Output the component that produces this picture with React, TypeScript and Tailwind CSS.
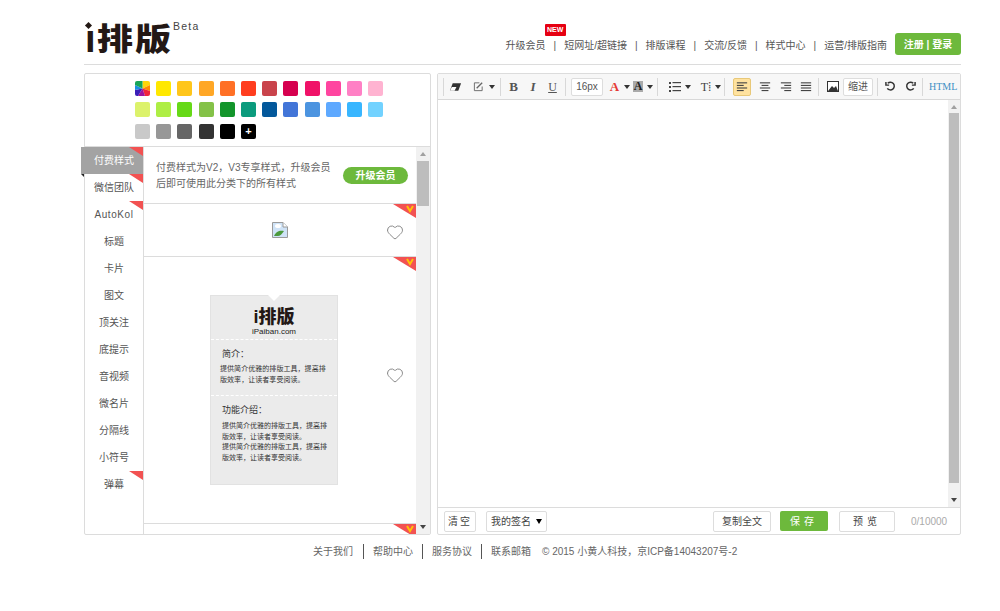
import { Heart } from "lucide-react";

const swatchRows = [
  ["rainbow", "#FFE800", "#FFC61B", "#FFA726", "#FF7026", "#FF3D1F", "#C9434B", "#D6004F", "#F01268", "#FF45A0", "#FF80C5", "#FFB3D1"],
  ["#DCF26B", "#AEEE45", "#66D917", "#84C248", "#13952B", "#0B9B7D", "#03589B", "#4275D8", "#4C94E0", "#5EA9FF", "#38B6FF", "#72D2FF"],
  ["#C9C9C9", "#979797", "#666666", "#333333", "#000000", "plus"],
];

const tabs = ["付费样式", "微信团队", "AutoKol", "标题", "卡片", "图文", "顶关注", "底提示", "音视频", "微名片", "分隔线", "小符号", "弹幕"];
const flagged = ["付费样式", "微信团队", "AutoKol", "弹幕"];
const navItems = ["升级会员", "短网址/超链接", "排版课程", "交流/反馈", "样式中心", "运营/排版指南"];

function Rainbow() {
  return (
    <svg viewBox="0 0 15 15" className="w-[15px] h-[15px] rounded-[2px]">
      <path d="M7.5 7.5V0H15V4Z" fill="#ffd60a" />
      <path d="M7.5 7.5L15 4V10Z" fill="#ff8a00" />
      <path d="M7.5 7.5L15 10V15H10Z" fill="#f0263c" />
      <path d="M7.5 7.5L10 15H3Z" fill="#a0139c" />
      <path d="M7.5 7.5L3 15H0V9Z" fill="#3a1fb8" />
      <path d="M7.5 7.5L0 9V4Z" fill="#1a8fe0" />
      <path d="M7.5 7.5L0 4V0H7.5Z" fill="#18a558" />
    </svg>
  );
}

function Caret({ className = "" }: { className?: string }) {
  return <span className={`inline-block w-0 h-0 border-x-[3px] border-x-transparent border-t-[4px] border-t-[#333] ${className}`} />;
}

function Sep({ ml = 0 }: { ml?: number }) {
  return <span className="w-px h-[18px] bg-[#d8d8d8] shrink-0" style={{ marginLeft: ml }} />;
}

function VipCorner() {
  return (
    <svg viewBox="0 0 23 14" className="absolute top-0 right-0 w-[23px] h-[14px]">
      <path d="M0 0H23V14Z" fill="#F25252" />
      <path d="M14 2L17 7L20 2" fill="none" stroke="#FFC107" strokeWidth="2" />
    </svg>
  );
}

function Lines({ offset }: { offset: number }) {
  const rows = [
    [1, 12],
    [4, 8],
    [7, 12],
    [10, 8],
  ];
  return (
    <svg viewBox="0 0 14 14" className="w-[12px] h-[12px]">
      {rows.map(([y, w], i) => (
        <rect key={i} x={offset === 0 ? 1 : offset === 1 ? (14 - w) / 2 : offset === 2 ? 13 - w : 1} y={y + 0.5} width={offset === 3 ? 12 : w} height="1.3" fill="#444" />
      ))}
    </svg>
  );
}

function Scrollbar({ thumbTop, thumbHeight, width }: { thumbTop: number; thumbHeight: number; width: number }) {
  return (
    <div className="relative shrink-0 bg-[#f1f1f1] h-full" style={{ width }}>
      <span className="absolute top-[5px] left-1/2 -ml-[3px] w-0 h-0 border-x-[3px] border-x-transparent border-b-[4px] border-b-[#a0a0a0]" />
      <div className="absolute left-px right-px bg-[#bdbdbd]" style={{ top: thumbTop, height: thumbHeight }} />
      <span className="absolute bottom-[5px] left-1/2 -ml-[3px] w-0 h-0 border-x-[3px] border-x-transparent border-t-[4px] border-t-[#444]" />
    </div>
  );
}

function PreviewCard() {
  return (
    <div className="relative w-[128px] h-[190px] bg-[#ebebeb] border border-[#e2e2e2] text-[#333] flex flex-col">
      <span className="absolute -top-px left-[57px] w-0 h-0 border-x-[6px] border-x-transparent border-t-[6px] border-t-white" />
      <div className="h-[44px] flex flex-col items-center justify-end pb-[3px] border-b border-dashed border-white">
        <span className="text-[18px] leading-[20px] font-black text-[#231815]">i排版</span>
        <span className="text-[8px] leading-[9px] text-[#222]">iPaiban.com</span>
      </div>
      <div className="h-[56px] border-b border-dashed border-white pl-[9px] pt-[8px]">
        <p className="text-[9px] leading-[12px] pl-[2px]">简介：</p>
        <p className="text-[7px] leading-[11px] mt-[3px] w-[110px] tracking-[0.05px]">提供简介优雅的排版工具，提高排版效率，让读者享受阅读。</p>
      </div>
      <div className="pl-[11px] pt-[8px]">
        <p className="text-[9px] leading-[12px]">功能介绍：</p>
        <p className="text-[7px] leading-[10.7px] mt-[5px] w-[110px]">提供简介优雅的排版工具，提高排版效率，让读者享受阅读。</p>
        <p className="text-[7px] leading-[10.7px] w-[110px]">提供简介优雅的排版工具，提高排版效率，让读者享受阅读。</p>
      </div>
    </div>
  );
}

export default function App() {
  return (
    <div className="w-[1000px] h-[611px] bg-white overflow-hidden text-[10px] text-[#555]" style={{ fontFamily: '"Liberation Sans", "Noto Sans CJK SC", sans-serif' }}>
      <div className="ml-[84px] w-[877px]">
        {/* Header */}
        <header className="h-[65px] flex items-start justify-between border-b border-[#dcdcdc]">
          <div className="flex items-start pt-[14px] text-[#231815]">
            <span className="relative w-[13px] h-[42px] text-[38px] leading-[42px] font-bold pl-[1px] mt-[4px]">
              ı
              <span className="absolute left-[2px] top-[5px] w-[5px] h-[5px] rotate-45 bg-[#231815]" />
            </span>
            <span className="inline-block origin-bottom scale-y-[0.85] text-[36px] leading-[42px] font-black tracking-[2px] mt-[2px]">排版</span>
            <span className="text-[10.5px] leading-[14px] tracking-[1.2px] text-[#444] pt-[5px]">Beta</span>
          </div>
          <div className="flex items-center pt-[33px]">
            <nav className="flex items-center h-[22px] pt-[2px]">
              {navItems.map((item, i) => (
                <div key={item} className="flex items-center relative">
                  {i > 0 && <span className="mx-[8px] text-[#555]">|</span>}
                  <span>{item}</span>
                  {i === 0 && (
                    <span className="absolute -top-[14px] -right-[20px] w-[21px] h-[12px] bg-[#E60012] text-white text-[7px] leading-[12px] text-center font-bold rounded-[1px]">NEW</span>
                  )}
                </div>
              ))}
            </nav>
            <button className="ml-[8px] w-[66px] h-[22px] bg-[#6DB93C] rounded-[3px] text-white text-[10px] font-bold">注册 | 登录</button>
          </div>
        </header>

        {/* Workspace */}
        <div className="flex mt-[8px] h-[462px] gap-[6px]">
          {/* Left panel */}
          <section className="w-[347px] h-full border border-[#dcdcdc] rounded-[2px] flex flex-col">
            <div className="h-[73px] shrink-0 border-b border-[#dcdcdc] pl-[50px] pt-[7px] flex flex-col gap-[6.3px]">
              {swatchRows.map((row, r) => (
                <div key={r} className="flex gap-[6.2px]">
                  {row.map((c) =>
                    c === "rainbow" ? (
                      <Rainbow key={c} />
                    ) : c === "plus" ? (
                      <span key={c} className="w-[15px] h-[15px] rounded-[2px] bg-black text-white text-[11px] leading-[15px] font-bold text-center">+</span>
                    ) : (
                      <span key={c} className="w-[15px] h-[15px] rounded-[2px]" style={{ backgroundColor: c }} />
                    )
                  )}
                </div>
              ))}
            </div>
            <div className="flex flex-1 min-h-0">
              <div className="w-[59px] shrink-0 border-r border-[#dcdcdc]">
                {tabs.map((tab, i) => (
                  <div
                    key={tab}
                    className={
                      i === 0
                        ? "relative -ml-[4px] h-[27px] bg-[#A3A3A3] text-white flex items-center justify-center pl-[4px]"
                        : "relative h-[27px] flex items-center justify-center"
                    }
                  >
                    <span className={tab === "AutoKol" ? "tracking-[0.6px]" : ""}>{tab}</span>
                    {flagged.includes(tab) && (
                      <svg viewBox="0 0 14 9" className="absolute top-0 right-0 w-[14px] h-[9px]">
                        <path d="M0 0H14V9Z" fill="#F25252" />
                      </svg>
                    )}
                    {i === 0 && (
                      <span className="absolute left-0 -bottom-[3px] w-0 h-0 border-l-[3px] border-l-transparent border-t-[3px] border-t-[#222]" />
                    )}
                  </div>
                ))}
              </div>
              <div className="flex-1 min-w-0 overflow-hidden">
                <div className="relative h-[57px] border-b border-[#dcdcdc] flex items-center pl-[12px] pr-[8px] justify-between">
                  <p className="leading-[16px] text-[#666] pt-[1px]">
                    付费样式为V2，V3专享样式，升级会员
                    <br />
                    后即可使用此分类下的所有样式
                  </p>
                  <button className="w-[65px] h-[17px] rounded-full bg-[#6DB93C] text-white text-[10px] leading-[17px] font-bold">升级会员</button>
                </div>
                <div className="relative h-[53px] border-b border-[#dcdcdc] flex items-center justify-center pr-[1px]">
                  <VipCorner />
                  <svg viewBox="0 0 16 16" className="w-[16px] h-[16px]">
                    <path d="M0.5 0.5H11L15.5 5V15.5H0.5Z" fill="#cfe3f7" stroke="#9a9a9a" />
                    <path d="M11 0.5V5H15.5" fill="#fff" stroke="#9a9a9a" />
                    <path d="M3 4A3 2 0 0 1 9 4A3 2 0 0 1 3 4Z" fill="#fff" />
                    <path d="M2 14C4 9 8 8 12 9C10 12 8 14 6 14Z" fill="#4c9a3c" />
                  </svg>
                  <Heart className="absolute right-[12px] top-[19px] w-[18px] h-[18px] text-[#888]" strokeWidth={1.3} />
                </div>
                <div className="relative h-[267px] border-b border-[#dcdcdc] pl-[66px] pt-[38px]">
                  <VipCorner />
                  <PreviewCard />
                  <Heart className="absolute right-[12px] top-[109px] w-[18px] h-[18px] text-[#888]" strokeWidth={1.3} />
                </div>
                <div className="relative h-[11px] overflow-hidden">
                  <VipCorner />
                </div>
              </div>
              <Scrollbar thumbTop={14} thumbHeight={45} width={14} />
            </div>
          </section>

          {/* Editor */}
          <section className="flex-1 min-w-0 h-full border border-[#dcdcdc] rounded-[2px] flex flex-col">
            <div className="h-[26px] shrink-0 bg-[#f7f7f7] border-b border-[#d8d8d8] flex items-center text-[#333] pl-[5px]">
              <Sep />
              <svg viewBox="0 0 14 10" className="ml-[5px] w-[13px] h-[10px]"><path d="M4 1H13L10 9H1Z" fill="#333" /><path d="M1 9L3 5H8L6 9Z" fill="#fff" /></svg>
              <svg viewBox="0 0 12 12" className="ml-[11px] w-[11px] h-[11px]" fill="none" stroke="#666"><path d="M10 6V10.5H1.5V2H7" /><path d="M4 8L10 2" strokeWidth="1.5" /></svg>
              <Caret className="ml-[5px]" />
              <Sep ml={5} />
              <span className="ml-[8px] w-[9px] text-[13px] font-bold text-center text-[#555]" style={{ fontFamily: '"Liberation Serif", serif' }}>B</span>
              <span className="ml-[11px] w-[8px] text-[13px] font-bold italic text-center text-[#555]" style={{ fontFamily: '"Liberation Serif", serif' }}>I</span>
              <span className="ml-[11px] w-[9px] text-[12px] underline text-center text-[#555]" style={{ fontFamily: '"Liberation Serif", serif' }}>U</span>
              <Sep ml={8} />
              <span className="ml-[5px] w-[32px] h-[18px] bg-white border border-[#ddd] rounded-[2px] text-[10px] leading-[16px] text-center text-[#555]">16px</span>
              <span className="ml-[6px] w-[11px] text-[13px] font-bold text-[#E53935] text-center" style={{ fontFamily: '"Liberation Serif", serif' }}>A</span>
              <Caret className="ml-[4px]" />
              <span className="ml-[3px] w-[10px] h-[11px] bg-[#aaa] text-[12px] leading-[11px] font-bold text-[#222] text-center" style={{ fontFamily: '"Liberation Serif", serif' }}>A</span>
              <Caret className="ml-[4px]" />
              <Sep ml={4} />
              <svg viewBox="0 0 12 12" className="ml-[11px] w-[12px] h-[12px]" fill="#444"><rect x="0" y="1" width="2" height="2" /><rect x="0" y="5" width="2" height="2" /><rect x="0" y="9" width="2" height="2" /><rect x="3.5" y="1" width="8.5" height="1.2" /><rect x="3.5" y="5" width="8.5" height="1.2" /><rect x="3.5" y="9" width="8.5" height="1.2" /></svg>
              <Caret className="ml-[4px]" />
              <span className="ml-[9px] w-[12px] text-[12px] text-[#444] text-center" style={{ fontFamily: '"Liberation Serif", serif' }}>T⁞</span>
              <Caret className="ml-[3px]" />
              <Sep ml={3} />
              <span className="ml-[8px] w-[18px] h-[18px] bg-[#FFE29F] border border-[#e8c878] rounded-[2px] flex items-center justify-center"><Lines offset={0} /></span>
              <span className="ml-[8px]"><Lines offset={1} /></span>
              <span className="ml-[9px]"><Lines offset={2} /></span>
              <span className="ml-[8px]"><Lines offset={3} /></span>
              <Sep ml={6} />
              <svg viewBox="0 0 12 11" className="ml-[8px] w-[12px] h-[11px]"><rect x="0.5" y="0.5" width="11" height="10" fill="#fff" stroke="#333" /><path d="M1 10L5 5L7 7L9 5L11 10Z" fill="#333" /></svg>
              <span className="ml-[4px] w-[30px] h-[18px] bg-white border border-[#ddd] rounded-[2px] text-[10px] leading-[16px] text-center text-[#555]">缩进</span>
              <Sep ml={4} />
              <svg viewBox="0 0 12 12" className="ml-[7px] w-[11px] h-[11px]" fill="none" stroke="#333" strokeWidth="1.6"><path d="M3 2.5A4.2 4.2 0 1 1 2.5 8" /><path d="M1 1V4.5H4.5" /></svg>
              <svg viewBox="0 0 12 12" className="ml-[9px] w-[11px] h-[11px]" fill="none" stroke="#333" strokeWidth="1.6"><path d="M9 2.5A4.2 4.2 0 1 0 9.5 8" /><path d="M11 1V4.5H7.5" /></svg>
              <Sep ml={6} />
              <span className="ml-[6px] text-[10px] text-[#3D8FC4]" style={{ fontFamily: '"Liberation Serif", serif' }}>HTML</span>
            </div>
            <div className="flex-1 min-h-0 flex justify-end bg-white">
              <Scrollbar thumbTop={13} thumbHeight={370} width={12} />
            </div>
            <div className="h-[27px] shrink-0 border-t border-[#dcdcdc] flex items-center pl-[6px] text-[#444]">
              <button className="w-[32px] h-[21px] border border-[#ddd] rounded-[2px] tracking-[2px]">清空</button>
              <button className="ml-[10px] w-[61px] h-[21px] border border-[#ddd] rounded-[2px] flex items-center justify-center gap-[5px]">我的签名<Caret className="!border-t-black !border-t-[5px]" /></button>
              <button className="ml-[166px] w-[58px] h-[21px] border border-[#ddd] rounded-[2px]">复制全文</button>
              <button className="ml-[9px] w-[48px] h-[20px] bg-[#6DB93C] text-white rounded-[2px] tracking-[4px]">保存</button>
              <button className="ml-[11px] w-[56px] h-[21px] border border-[#ddd] rounded-[2px] tracking-[4px]">预览</button>
              <span className="ml-[16px] text-[#aaa]">0/10000</span>
            </div>
          </section>
        </div>

        {/* Footer */}
        <footer className="ml-[229px] mt-[8px] h-[16px] flex items-center text-[#666]">
          <span>关于我们</span>
          <span className="w-px h-[15px] bg-[#555] mx-[9.5px]" />
          <span>帮助中心</span>
          <span className="w-px h-[15px] bg-[#555] mx-[9px]" />
          <span>服务协议</span>
          <span className="w-px h-[15px] bg-[#555] mx-[9px]" />
          <span>联系邮箱</span>
          <span className="ml-[11px]">© 2015 小黄人科技，京ICP备14043207号-2</span>
        </footer>
      </div>
    </div>
  );
}
